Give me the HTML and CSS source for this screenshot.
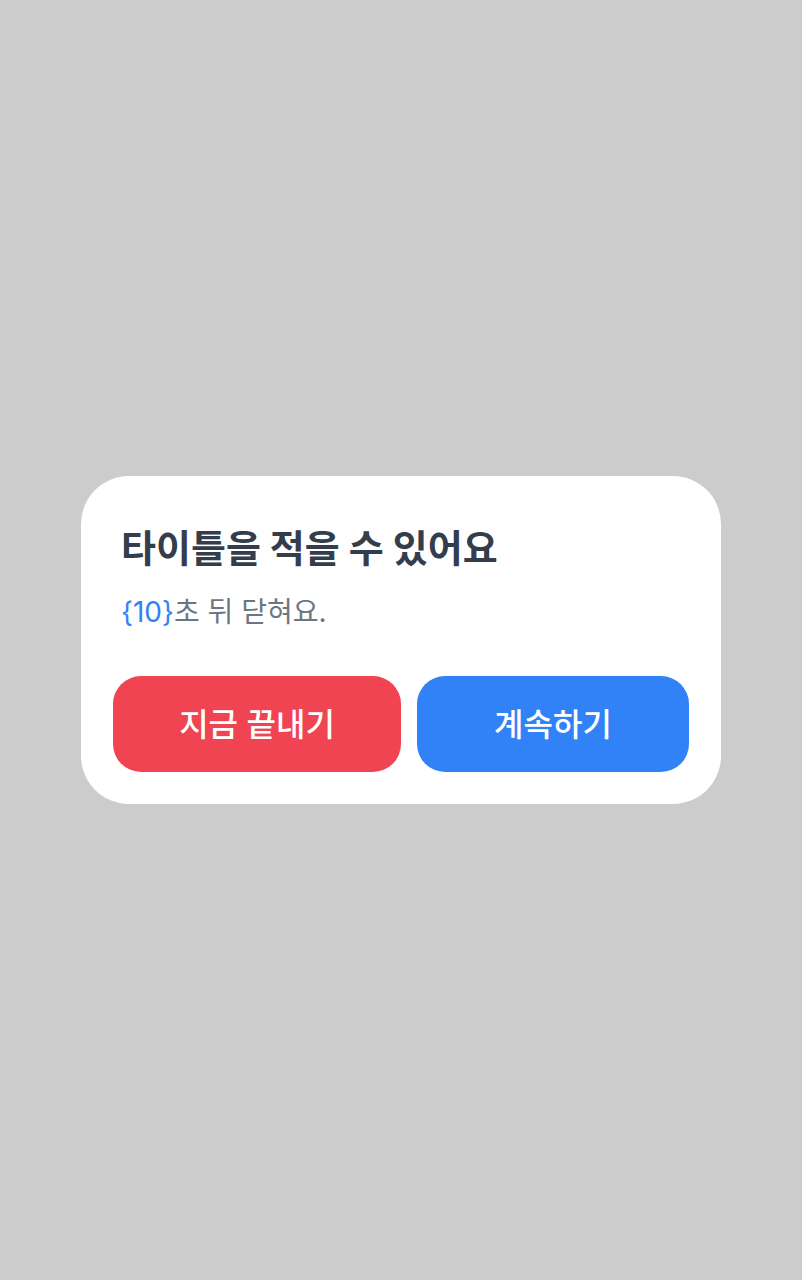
FILE: index.html
```html
<!doctype html>
<html lang="ko">

<head>
    <meta charset="utf-8">
    <title>타이틀을 적을 수 있어요</title>
    <meta name="viewport" content="width=device-width, initial-scale=1">
    <link rel="stylesheet" href="styles.css">
</head>

<body>
    <div class="overlay">
        <div class="dialog" role="dialog" aria-labelledby="dialog-title" aria-describedby="dialog-desc">
            <div class="dialog-text">
                <h1 class="title" id="dialog-title">타이틀을 적을 수 있어요</h1>
                <p class="desc" id="dialog-desc"><span class="count">{10}</span>초 뒤 닫혀요.</p>
            </div>
            <div class="btn-group">
                <button type="button" class="btn btn-end">지금 끝내기</button>
                <button type="button" class="btn btn-continue">계속하기</button>
            </div>
        </div>
    </div>
</body>

</html>
```
FILE: styles.css
```css
html,
body {
    height: 100%;
    margin: 0;
    font-family: Inter, 'Noto Sans CJK KR', sans-serif;
}

.overlay {
    min-height: 100%;
    display: flex;
    justify-content: center;
    align-items: center;
    box-sizing: border-box;
    padding: 0 80px;
    background: #ccc;
}

.dialog {
    width: 100%;
    max-width: 640px;
    box-sizing: border-box;
    padding: 40px 32px 32px;
    background: #fff;
    border-radius: 48px;
}

.dialog-text {
    padding: 0 8px;
}

.title {
    margin: 0;
    font-size: 38px;
    line-height: 64px;
    font-weight: 700;
    color: #333d4b;
}

.desc {
    margin: 8px 0 40px;
    font-size: 28px;
    line-height: 48px;
    color: #6b7684;
}

.count {
    color: #3182f6;
}

.btn-group {
    display: flex;
    gap: 16px;
}

.btn {
    height: 96px;
    padding: 0 0 4px;
    border: 0;
    border-radius: 28px;
    font-family: inherit;
    font-size: 32px;
    font-weight: 500;
    color: #fff;
    cursor: pointer;
}

.btn-end {
    flex: 18;
    background: #f04452;
}

.btn-continue {
    flex: 17;
    background: #3182f6;
}
```
